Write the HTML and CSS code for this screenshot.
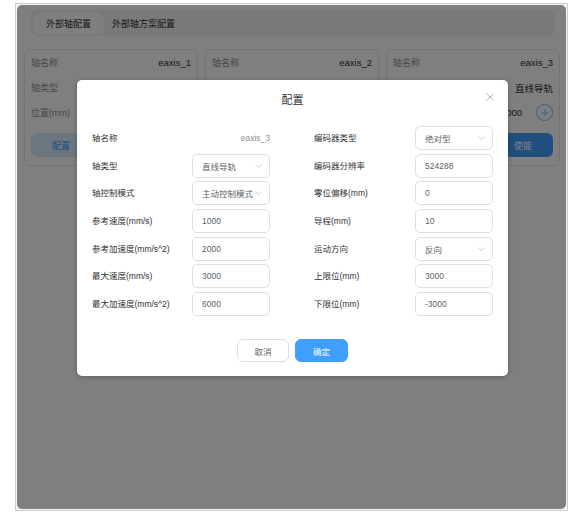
FILE: index.html
```html
<!DOCTYPE html>
<html lang="zh">
<head>
<meta charset="utf-8">
<title>外部轴配置</title>
<link rel="stylesheet" href="styles.css">
</head>
<body>
<div class="frame">
  <div class="screen">
    <div class="tabs">
      <div class="tab active">外部轴配置</div>
      <div class="tab">外部轴方案配置</div>
    </div>
    <div class="cards">
      <div class="card">
        <div class="row"><span class="k">轴名称</span><span class="v">eaxis_1</span></div>
        <div class="row"><span class="k">轴类型</span><span class="v">直线导轨</span></div>
        <div class="row"><span class="k">位置(mm)</span><span class="v">1000 <span class="plus"><svg width="14" height="14" viewBox="0 0 14 14"><path d="M7 3.5v7M3.5 7h7" stroke="#79bbff" stroke-width="1" fill="none"/></svg></span></span></div>
        <div class="actions"><button class="btn-light">配置</button></div>
      </div>
      <div class="card">
        <div class="row"><span class="k">轴名称</span><span class="v">eaxis_2</span></div>
        <div class="row"><span class="k">轴类型</span><span class="v">直线导轨</span></div>
        <div class="row"><span class="k">位置(mm)</span><span class="v">1000 <span class="plus"><svg width="14" height="14" viewBox="0 0 14 14"><path d="M7 3.5v7M3.5 7h7" stroke="#79bbff" stroke-width="1" fill="none"/></svg></span></span></div>
        <div class="actions"></div>
      </div>
      <div class="card">
        <div class="row"><span class="k">轴名称</span><span class="v">eaxis_3</span></div>
        <div class="row"><span class="k">轴类型</span><span class="v">直线导轨</span></div>
        <div class="row"><span class="k">位置(mm)</span><span class="v">1000 <span class="plus"><svg width="14" height="14" viewBox="0 0 14 14"><path d="M7 3.5v7M3.5 7h7" stroke="#79bbff" stroke-width="1" fill="none"/></svg></span></span></div>
        <div class="actions"><button class="btn-blue">使能</button></div>
      </div>
    </div>

    <div class="overlay"></div>

    <div class="modal">
      <div class="modal-head">
        <span class="title">配置</span>
        <span class="close"><svg width="8" height="8" viewBox="0 0 8 8"><path d="M0.5 0.5L7.5 7.5M7.5 0.5L0.5 7.5" stroke="#a8abb2" stroke-width="0.9" fill="none"/></svg></span>
      </div>
      <div class="form">
        <div class="col">
          <label>轴名称</label><div class="static">eaxis_3</div>
          <label>轴类型</label><div class="field"><span>直线导轨</span><svg class="chev" width="7" height="4" viewBox="0 0 7 4"><polyline points="0.5,0.5 3.5,3.5 6.5,0.5" stroke="#c0c4cc" stroke-width="0.8" fill="none"/></svg></div>
          <label>轴控制模式</label><div class="field"><span>主动控制模式</span><svg class="chev" width="7" height="4" viewBox="0 0 7 4"><polyline points="0.5,0.5 3.5,3.5 6.5,0.5" stroke="#c0c4cc" stroke-width="0.8" fill="none"/></svg></div>
          <label>参考速度(mm/s)</label><div class="field"><span>1000</span></div>
          <label>参考加速度(mm/s^2)</label><div class="field"><span>2000</span></div>
          <label>最大速度(mm/s)</label><div class="field"><span>3000</span></div>
          <label>最大加速度(mm/s^2)</label><div class="field"><span>6000</span></div>
        </div>
        <div class="col col-r">
          <label>编码器类型</label><div class="field"><span>绝对型</span><svg class="chev" width="7" height="4" viewBox="0 0 7 4"><polyline points="0.5,0.5 3.5,3.5 6.5,0.5" stroke="#c0c4cc" stroke-width="0.8" fill="none"/></svg></div>
          <label>编码器分辨率</label><div class="field"><span>524288</span></div>
          <label>零位偏移(mm)</label><div class="field"><span>0</span></div>
          <label>导程(mm)</label><div class="field"><span>10</span></div>
          <label>运动方向</label><div class="field"><span>反向</span><svg class="chev" width="7" height="4" viewBox="0 0 7 4"><polyline points="0.5,0.5 3.5,3.5 6.5,0.5" stroke="#c0c4cc" stroke-width="0.8" fill="none"/></svg></div>
          <label>上限位(mm)</label><div class="field"><span>3000</span></div>
          <label>下限位(mm)</label><div class="field"><span>-3000</span></div>
        </div>
      </div>
      <div class="modal-foot">
        <button class="btn-cancel">取消</button>
        <button class="btn-ok">确定</button>
      </div>
    </div>
  </div>
</div>
</body>
</html>
```
FILE: styles.css
```css
* { box-sizing: border-box; }
html, body { margin: 0; padding: 0; background: #fff; }
body {
  font-family: "Liberation Sans", "Noto Sans CJK SC", sans-serif;
  color: #303133;
}
button { font-family: inherit; cursor: pointer; }

.frame {
  margin: 3px 0 0 15px;
  width: 553px;
  height: 508px;
  border: 1px solid #cdcdcd;
  padding: 1px;
  background: #f4f4f4;
}
.screen {
  position: relative;
  width: 100%;
  height: 100%;
  background: #fff;
  border-radius: 5px;
  overflow: hidden;
  padding: 5px 6px 0 7px;
}

.tabs {
  margin: 0 5px 0 6px;
  height: 26px;
  background: #f2f3f5;
  border-radius: 8px;
  padding: 3px;
  display: flex;
  align-items: center;
  font-size: 9px;
  color: #303133;
  white-space: nowrap;
}
.tab { height: 21px; display: flex; align-items: center; padding: 0 8px; }
.tab.active { background: #fff; border-radius: 7px; width: 71px; padding: 0; justify-content: center; }

.cards {
  margin-top: 13px;
  display: flex;
  gap: 7px;
}
.card {
  width: 174px;
  background: #fff;
  border: 1px solid #e4e7ed;
  border-radius: 6px;
  padding: 0 6px 8px 6px;
  font-size: 9.5px;
}
.row { height: 25px; display: flex; align-items: center; justify-content: space-between; }
.k { color: #909399; font-size: 9px; }
.v { color: #303133; display: flex; align-items: center; gap: 14px; }
.plus {
  width: 17px; height: 17px; border: 1px solid #79bbff; border-radius: 50%;
  display: flex; align-items: center; justify-content: center;
}
.actions { margin-top: 8px; height: 24px; display: flex; }
.actions button {
  width: 60px; height: 24px; border-radius: 6px; font-size: 9px; border: none;
}
.btn-light { background: #d9ecff; color: #409eff; }
.btn-blue { background: #409eff; color: #fff; margin-left: auto; }

.overlay {
  position: absolute;
  inset: 0;
  background: rgba(0, 0, 0, 0.5);
}

.modal {
  position: absolute;
  left: 60px;
  top: 75px;
  width: 431px;
  height: 296px;
  background: #fff;
  border-radius: 5px;
  box-shadow: 0 1px 5px rgba(0, 0, 0, 0.25);
}
.modal-head {
  position: relative;
  height: 38px;
  display: flex;
  align-items: center;
  justify-content: center;
}
.title { font-size: 11px; color: #303133; }
.close { position: absolute; right: 14px; top: 13px; width: 8px; height: 8px; display: flex; }

.form {
  padding: 8px 15px 0;
  display: flex;
  gap: 44px;
}
.col {
  display: grid;
  grid-template-columns: 100px 78px;
  grid-auto-rows: 24px;
  row-gap: 3.7px;
  align-items: center;
}
.col-r { grid-template-columns: 101px 78px; }
.col label { font-size: 8.5px; line-height: 12px; color: #303133; white-space: nowrap; }
.static { text-align: right; font-size: 8.5px; line-height: 12px; color: #909399; }
.field {
  height: 24px;
  border: 1px solid #dcdfe6;
  border-radius: 5px;
  padding: 0 7px 0 9px;
  display: flex;
  align-items: center;
  justify-content: space-between;
  font-size: 8.5px;
  color: #606266;
}
.chev { flex: none; }

.modal-foot {
  margin-top: 23px;
  display: flex;
  justify-content: center;
  gap: 6px;
}
.modal-foot button {
  height: 23px;
  border-radius: 6px;
  font-size: 8.5px;
}
.btn-cancel { width: 52px; background: #fff; border: 1px solid #dcdfe6; color: #606266; }
.btn-ok { width: 53px; background: #409eff; border: 1px solid #409eff; color: #fff; }
```
